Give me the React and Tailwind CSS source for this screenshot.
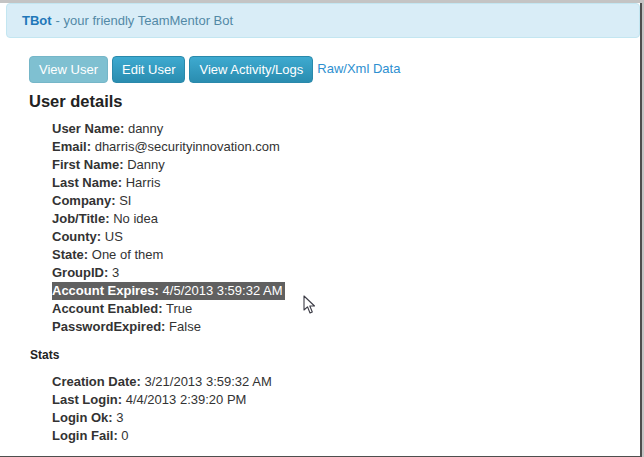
import React from 'react';

const userFields = [
    ['User Name', 'danny'],
    ['Email', 'dharris@securityinnovation.com'],
    ['First Name', 'Danny'],
    ['Last Name', 'Harris'],
    ['Company', 'SI'],
    ['Job/Title', 'No idea'],
    ['County', 'US'],
    ['State', 'One of them'],
    ['GroupID', '3'],
    ['Account Expires', '4/5/2013 3:59:32 AM', true],
    ['Account Enabled', 'True'],
    ['PasswordExpired', 'False'],
];

const statFields = [
    ['Creation Date', '3/21/2013 3:59:32 AM'],
    ['Last Login', '4/4/2013 2:39:20 PM'],
    ['Login Ok', '3'],
    ['Login Fail', '0'],
];

const Field = ({ label, value, selected }) => (
    <li className="h-[18px] leading-[18px]">
        <span className={selected ? 'inline-block h-[18px] bg-[#606060] text-white pr-[2px]' : ''}>
            <b className="font-bold">{label}:</b> {value}
        </span>
    </li>
);

const Cursor = () => (
    <svg className="absolute left-[303px] top-[292px]" width="13" height="20" viewBox="0 0 13 20">
        <path
            d="M1 1 L1 15 L4.5 11.8 L7 18 L9.3 17 L6.8 11 L11.5 11 Z"
            fill="white"
            stroke="#3c3c46"
            strokeWidth="1.1"
            strokeLinejoin="round"
        />
    </svg>
);

export default function App() {
    return (
        <div className="w-[644px] h-[457px] bg-[#c4c4c4] overflow-hidden font-['Liberation_Sans',Arial,sans-serif] text-[13px] text-[#333]">
            <div className="relative w-[642px] h-[455px] bg-white border-r-2 border-b-2 border-[#4e4e4e]">
                {/* Alert bar */}
                <div className="ml-[6px] mt-[3px] h-[35px] flex items-center pl-[15px] bg-[#d9edf7] border border-[#c3e6f1] rounded-[4px] text-[#5289a6]">
                    <b className="font-bold text-[#1f78b9] mr-[4px]">TBot</b>- your friendly TeamMentor Bot
                </div>

                <div className="pl-[29px]">
                    {/* Buttons */}
                    <div className="mt-[18px] flex items-center gap-[4px]">
                        <span className="h-[27px] px-[9px] flex items-center rounded-[4px] bg-[#7fc0d1] border border-[#75b6c8] text-white">
                            View User
                        </span>
                        <span className="h-[27px] px-[9px] flex items-center rounded-[4px] bg-gradient-to-b from-[#3eaad0] to-[#2a8db0] border border-[#2a89ab] text-white">
                            Edit User
                        </span>
                        <span className="h-[27px] px-[9px] flex items-center rounded-[4px] bg-gradient-to-b from-[#3eaad0] to-[#2a8db0] border border-[#2a89ab] text-white">
                            View Activity/Logs
                        </span>
                        <span className="text-[#2d8fd0] -mt-[2px]">Raw/Xml Data</span>
                    </div>

                    <h2 className="mt-[8px] text-[16.5px] leading-[20px] font-bold text-[#222]">User details</h2>

                    <ul className="mt-[9px] pl-[23px]">
                        {userFields.map(([label, value, selected]) => (
                            <Field key={label} label={label} value={value} selected={selected} />
                        ))}
                    </ul>

                    <h3 className="mt-[10px] pl-[1px] text-[12px] leading-[18px] font-bold text-[#222]">Stats</h3>

                    <ul className="mt-[9px] pl-[23px]">
                        {statFields.map(([label, value]) => (
                            <Field key={label} label={label} value={value} />
                        ))}
                    </ul>
                </div>

                <Cursor />
            </div>
        </div>
    );
}
